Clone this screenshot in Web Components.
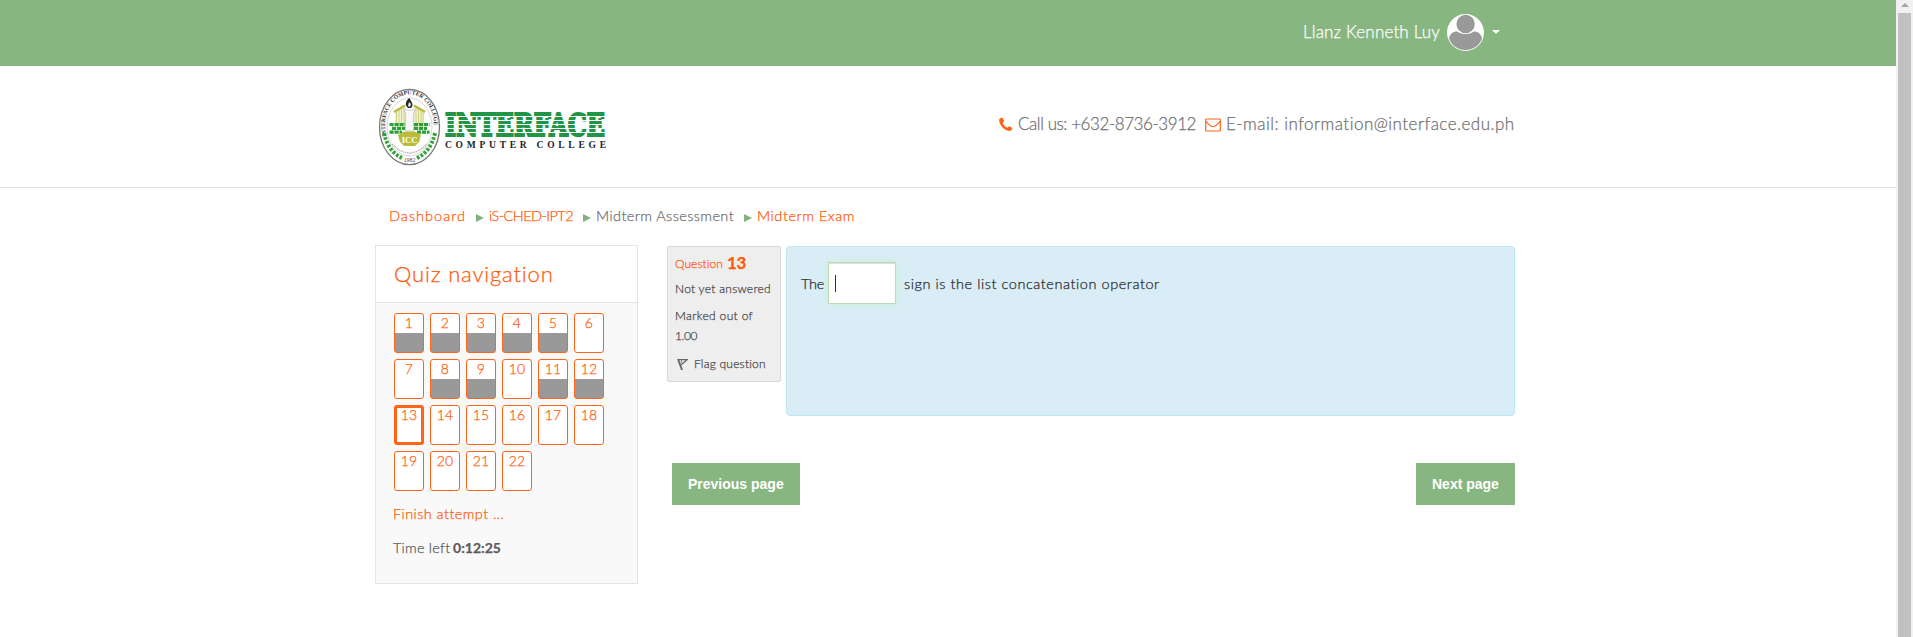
<!DOCTYPE html>
<html lang="en">
<head>
<meta charset="utf-8">
<title>Midterm Exam</title>
<style>
html,body{margin:0;height:100%;overflow:hidden;background:#fff}
body{font-family:Lato,"Century Gothic",sans-serif;font-weight:300;color:#5c5c5c;-webkit-text-stroke:.25px currentColor}
</style>
</head>
<body>
<quiz-page></quiz-page>
<script>
const define = (name, css, html, setup) => {
  const t = document.createElement('template');
  t.innerHTML = `<style>${css}</style>${html}`;
  customElements.define(name, class extends HTMLElement {
    connectedCallback() {
      if (this.shadowRoot) return;
      this.attachShadow({ mode: 'open' }).append(t.content.cloneNode(true));
      if (setup) setup(this, this.shadowRoot);
    }
  });
};

/* A single line of text tracked out to a given measure: w = width, s = size, h = line height */
define('text-run', `:host{display:block;white-space:nowrap;flex:none}span{display:inline-block}`,
  `<span><slot></slot></span>`, (el, root) => {
    const w = +el.getAttribute('w'), s = el.getAttribute('s'), h = el.getAttribute('h');
    el.style.fontSize = s + 'px';
    el.style.lineHeight = h + 'px';
    el.style.height = h + 'px';
    el.style.width = w + 'px';
    const span = root.querySelector('span');
    const natural = span.getBoundingClientRect().width;
    el.style.letterSpacing = ((w - natural) / el.textContent.length) + 'px';
  });

define('user-bar', `
:host{display:flex;box-sizing:border-box;height:66px;background:#88b681;color:#fff;padding:14px 396px 0 0;justify-content:flex-end}
text-run{margin-right:7px;margin-top:8px}
.av{width:37px;height:37px;display:block}
.c{border:4px solid transparent;border-top-color:#fff;border-bottom:0;margin:16px 0 0 8px;width:0;height:0}`,
`<text-run w="137" s="17" h="20">Llanz Kenneth Luy</text-run>
<svg class="av" viewBox="0 0 37 37"><circle cx="18.5" cy="18.5" r="18.5" fill="#fff"/><circle cx="18.6" cy="10" r="9.2" fill="#999"/><path d="M2 24.5C3 19.5 6 17.2 10.500 17.400C15 21 22 21 26.500 17.400C31 17.200 34 19.500 35 24.500C32 32 26 36 18.500 36C11 36 5 32 2 24.500Z" fill="#999"/></svg><i class="c"></i>`);

define('college-logo', `:host{display:flex;align-items:flex-start;-webkit-text-stroke:0}
svg{display:block;flex:none;overflow:visible}`,
`<svg width="63" height="78" viewBox="0 0 63 78">
<defs><path id="top" d="M8.500 48A24.500 31 0 1 1 54.500 48"/></defs>
<ellipse cx="31.500" cy="39" rx="30" ry="37.700" fill="#fff" stroke="#777" stroke-width="1.300"/>
<ellipse cx="31.500" cy="39" rx="22.500" ry="29" fill="#fff" stroke="#bbb" stroke-width=".6"/>
<text font-family="Liberation Serif,serif" font-weight="bold" font-size="5.800" fill="#333"><textPath href="#top" textLength="98" lengthAdjust="spacingAndGlyphs">INTERFACE COMPUTER COLLEGE</textPath></text>
<path d="M17 23L28 16V40H17ZM35 16L46 23V40H35Z" fill="#f1f1cf"/>
<path d="M18.500 24V36M21 22V36M23.500 21V36M26 20V36M38 20V36M40.500 21V36M43 22V36M45 24V36" stroke="#d0d283" stroke-width="1"/>
<path d="M16 24L27 17.500M36 17.500L47 24" stroke="#b8ba42" stroke-width="2.600"/>
<path d="M26 22H37L35.500 26V43H27.500V26Z" fill="#f8f8f8" stroke="#b9b9b9" stroke-width=".7"/>
<path d="M31 10C27 14 27 17 30 20H33C36 17 34 15 32 11Z" fill="#252525"/><path d="M31 14L30 18L32 19L33 16Z" fill="#eee"/>
<path d="M11.500 36.500H27M14 40.300H27M11.500 44.100H24M36 36.500H51.500M36 40.300H49M39 44.100H51.500" stroke="#2d9f3a" stroke-width="3.200" stroke-dasharray="4.200 .8"/>
<path d="M20 47L26 43.500H37L43 47L41 54L37 58H26L22 54Z" fill="#b9bd3a"/>
<text x="31.500" y="54.500" text-anchor="middle" font-family="Liberation Serif,serif" font-weight="bold" font-size="8.500" fill="#fff">ICC</text>
<path d="M6 45Q10 64 25 70.500M57 45Q53 64 38 70.500" fill="none" stroke="#36a13b" stroke-width="4" stroke-dasharray="2.600 1.600"/>
<path d="M14 56Q31.500 74 49 56" fill="none" stroke="#bbb" stroke-width="1.500" stroke-dasharray="1.500 .7"/>
<text x="31.500" y="74" text-anchor="middle" font-family="Liberation Serif,serif" font-size="5.800" fill="#444">1982</text>
</svg>
<svg width="166" height="78" viewBox="0 0 166 78" style="margin-left:2px">
<text x="2" y="48.300" font-family="DejaVu Serif,serif" font-weight="bold" font-size="32" fill="#219445" stroke="#219445" stroke-width="2.200" textLength="160" lengthAdjust="spacingAndGlyphs">INTERFACE</text>
<path d="M0 28.500H166M0 32.500H166M0 36.500H166M0 40.500H166M0 44.500H166" stroke="#fff" stroke-width="1"/>
<text x="2" y="59.500" font-family="Liberation Serif,serif" font-weight="bold" font-size="9.500" fill="#222" textLength="161">COMPUTER COLLEGE</text>
</svg>`);

define('site-header', `
:host{display:flex;box-sizing:border-box;height:122px;border-bottom:1px solid #e1e1e1;padding:22px 381px 0 378px;justify-content:space-between;color:#707070}
.contact{display:flex;padding-top:26px}
svg{flex:none;display:block}`,
`<college-logo></college-logo>
<div class="contact">
<svg width="14" height="15" viewBox="0 0 14 15" style="margin:3px 5px 0 0"><path d="M.5 1.800C1.500.8 3 .4 3.600.8L5.200 4C5 4.800 3.700 5.400 3.800 6C4.400 8 6.400 10 8.200 10.600C8.900 10.700 9.400 9.300 10.300 9.200L13.200 10.800C13.500 11.500 13.100 12.900 12.200 13.500C9 15 5.500 12.500 3.200 10C1 7.500-.5 4 .5 1.800Z" fill="#ff6519"/></svg>
<text-run w="178" s="17" h="20">Call us: +632-8736-3912</text-run>
<svg width="16" height="14" viewBox="0 0 16 14" style="margin:4px 5px 0 9px"><path d="M1.500 1H14.500Q15.300 1 15.300 1.800V12.200Q15.300 13 14.500 13H1.500Q.7 13 .7 12.200V1.800Q.7 1 1.500 1ZM.8 3C3 6 5.500 8.600 8 8.600S13 6 15.200 3" fill="none" stroke="#ff6519" stroke-width="1.200"/></svg>
<text-run w="289" s="17" h="20">E-mail: information@interface.edu.ph</text-run>
</div>`);

define('bread-crumbs', `
:host{display:flex;height:57px;box-sizing:border-box;padding:18px 0 0 14px;color:#ff5a0a}
.g{color:#707070}
i{flex:none;width:0;height:0;border:4px solid transparent;border-left:8px solid #82b37e;border-right:0;margin:8px 5px 0 10px}`,
`<text-run w="77" s="14.500" h="20">Dashboard</text-run><i></i><text-run w="84" s="14.500" h="20">iS-CHED-IPT2</text-run><i></i><text-run class="g" w="138" s="14.500" h="20">Midterm Assessment</text-run><i></i><text-run w="98" s="14.500" h="20">Midterm Exam</text-run>`);

define('quiz-cell', `
:host{display:block;box-sizing:border-box;width:30px;height:40px;border:1px solid #ff6519;border-radius:3px;background:#fff;color:#ff5a0a;font-size:14px;line-height:18px;text-align:center;letter-spacing:.2px}
:host([answered]){background:linear-gradient(#fff 19px,#999 19px)}
:host([current]){border-width:3px;line-height:14px}`, `<slot></slot>`);

define('quiz-navigation', `
:host{display:block;box-sizing:border-box;width:263px;height:339px;border:1px solid #e4e4e4;background:#f9f9f9}
header{height:56px;box-sizing:content-box;border-bottom:1px solid #e4e4e4;background:#fff;color:#ff5a0a;padding-left:18px;display:flex;align-items:center}
.grid{display:grid;grid-template-columns:repeat(6,30px);gap:6px;padding:10px 0 0 18px}
.f{color:#ff5a0a;margin:13px 0 0 17px}
.t{display:flex;gap:3px;margin:14px 0 0 17px}`,
`<header><text-run w="160" s="22" h="28">Quiz navigation</text-run></header>
<div class="grid"></div>
<text-run class="f" w="111" s="14.500" h="20">Finish attempt ...</text-run>
<div class="t"><text-run w="57" s="14.500" h="20">Time left</text-run><text-run w="48" s="14" h="20" style="font-weight:bold">0:12:25</text-run></div>`,
(el, root) => {
  const answered = [1, 2, 3, 4, 5, 8, 9, 11, 12];
  for (let n = 1; n <= 22; n++) {
    const c = document.createElement('quiz-cell');
    c.textContent = n;
    if (answered.includes(n)) c.setAttribute('answered', '');
    if (n === 13) c.setAttribute('current', '');
    root.querySelector('.grid').append(c);
  }
});

define('question-info', `
:host{display:block;box-sizing:border-box;width:114px;height:136px;border:1px solid #d8d8d8;border-radius:2px;background:#eee;padding:6px 7px;color:#484848}
div{display:flex}
.q{color:#ff5a0a;gap:4px;height:20px}
svg{display:block;margin:4px 6px 0 2px;flex:none}`,
`<div class="q"><text-run w="48" s="12" h="22">Question</text-run><text-run w="19" s="17" h="19" style="font-weight:bold">13</text-run></div>
<text-run w="96" s="12" h="20" style="margin-top:6px">Not yet answered</text-run>
<text-run w="78" s="12" h="20" style="margin-top:7px">Marked out of</text-run>
<text-run w="22" s="12" h="20">1.00</text-run>
<div style="margin-top:8px"><svg width="11" height="13" viewBox="0 0 11 13"><path d="M1 1L5 12" stroke="#666" stroke-width="1.900"/><path d="M1.500 1.600H10.300L4.200 6.800" fill="none" stroke="#666" stroke-width="1.300"/><path d="M4.500 2V5" stroke="#888"/></svg><text-run w="72" s="12" h="20">Flag question</text-run></div>`);

define('answer-box', `
:host{display:block;box-sizing:border-box;width:68px;height:42px;background:#fff;border:1px solid #bcdab4;box-shadow:0 0 8px #c8f2cc,inset 0 1px 1px #ddd;padding:12px 0 0 6px}
i{display:block;width:1px;height:17px;background:#333}`, `<i></i>`);

define('question-body', `
:host{display:flex;box-sizing:border-box;width:729px;height:170px;border:1px solid #bce8f1;border-radius:4px;background:#d9edf7;color:#2a2a2a;padding:15px 0 0 14px}
text-run{margin-top:12px}
answer-box{margin:0 8px 0 4px}`,
`<text-run w="23" s="14.500" h="20">The</text-run><answer-box></answer-box><text-run w="256" s="14.500" h="20">sign is the list concatenation operator</text-run>`);

define('page-button', `
:host{display:flex;box-sizing:border-box;height:42px;background:#88b681;color:#fff;align-items:center;padding-left:16px;font:bold 14px "Liberation Sans",Arial,sans-serif;-webkit-text-stroke:0}`,
`<slot></slot>`);

define('scroll-bar', `
:host{display:flex;flex-direction:column;align-items:center;width:17px;height:637px;background:#f1f1f1}
i{width:0;height:0;border:4px solid transparent;border-bottom:4px solid #a3a3a3;border-top:0;margin:3px 0 6px}
b{width:13px;flex:1;background:#c1c1c1}`, `<i></i><b></b>`);

define('quiz-page', `
:host{display:flex;width:1913px;height:637px;overflow:hidden}
main{width:1896px}
.wrap{margin-left:375px;width:1140px}
.cols{display:flex}
.right{margin-left:29px;flex:1;padding-top:1px}
.q{display:flex;gap:5px}
.b{display:flex;justify-content:space-between;margin:47px 0 0 5px}`,
`<main><user-bar></user-bar><site-header></site-header>
<div class="wrap"><bread-crumbs></bread-crumbs>
<div class="cols"><quiz-navigation></quiz-navigation>
<div class="right"><div class="q"><question-info></question-info><question-body></question-body></div>
<div class="b"><page-button style="width:128px">Previous page</page-button><page-button style="width:99px">Next page</page-button></div></div></div></div></main>
<scroll-bar></scroll-bar>`);
</script>
</body>
</html>
